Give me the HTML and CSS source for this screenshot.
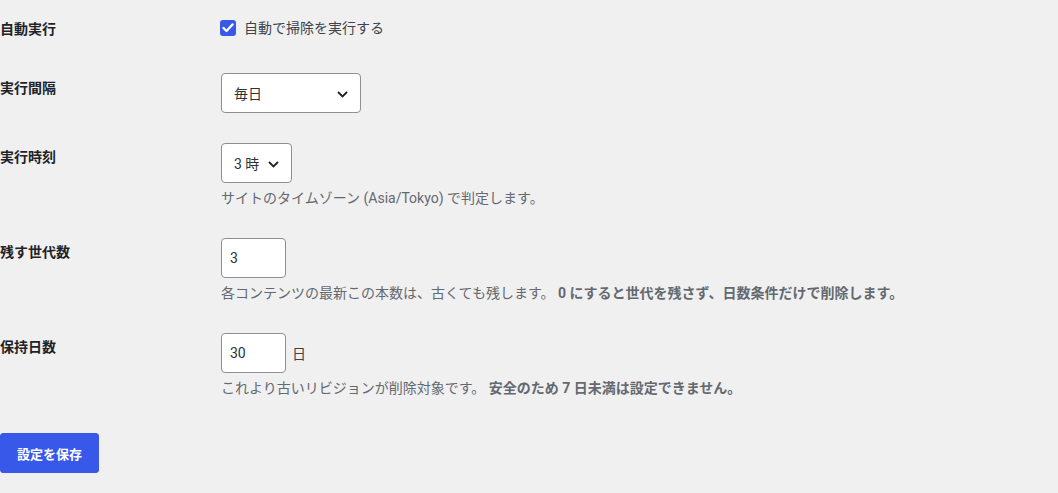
FILE: index.html
```html
<!DOCTYPE html>
<html lang="ja">
<head>
<meta charset="utf-8">
<title>設定</title>
<link rel="stylesheet" href="styles.css">
</head>
<body>
<form class="settings">
  <div class="row">
    <div class="row-label">自動実行</div>
    <div class="field field-first">
      <label class="check">
        <span class="check-box">
          <svg width="12" height="10" viewBox="0 0 12 10"><polyline points="1.5,5 4.5,8 10.5,1.5" fill="none" stroke="#fff" stroke-width="2.4" stroke-linejoin="round" stroke-linecap="round"/></svg>
        </span>
        <span>自動で掃除を実行する</span>
      </label>
    </div>
  </div>

  <div class="row">
    <div class="row-label">実行間隔</div>
    <div class="field field-tight">
      <div class="select select-wide">
        <span class="select-value">毎日</span>
        <svg class="chevron" width="11" height="7" viewBox="0 0 11 7"><polyline points="1,1 5.5,5.5 10,1" fill="none" stroke="#1d2327" stroke-width="1.8"/></svg>
      </div>
    </div>
  </div>

  <div class="row">
    <div class="row-label">実行時刻</div>
    <div class="field">
      <div class="select select-narrow">
        <span class="select-value">3 時</span>
        <svg class="chevron" width="11" height="7" viewBox="0 0 11 7"><polyline points="1,1 5.5,5.5 10,1" fill="none" stroke="#1d2327" stroke-width="1.8"/></svg>
      </div>
      <p class="desc">サイトのタイムゾーン (Asia/Tokyo) で判定します。</p>
    </div>
  </div>

  <div class="row">
    <div class="row-label">残す世代数</div>
    <div class="field">
      <div class="input">3</div>
      <p class="desc">各コンテンツの最新この本数は、古くても残します。 <strong>0 にすると世代を残さず、日数条件だけで削除します。</strong></p>
    </div>
  </div>

  <div class="row">
    <div class="row-label">保持日数</div>
    <div class="field">
      <div class="input-line">
        <div class="input">30</div>
        <span class="unit">日</span>
      </div>
      <p class="desc">これより古いリビジョンが削除対象です。 <strong>安全のため 7 日未満は設定できません。</strong></p>
    </div>
  </div>

  <div class="submit">
    <span class="button-primary">設定を保存</span>
  </div>
</form>
</body>
</html>
```

FILE: styles.css
```css
html, body {
  margin: 0;
  padding: 0;
  background: #f0f0f1;
}

body {
  font-family: Roboto, "Noto Sans CJK JP", sans-serif;
  font-size: 13px;
  color: #3c434a;
}

.row {
  display: grid;
  grid-template-columns: 221px 1fr;
  align-items: start;
}

.row-label {
  padding: 20px 0;
  font-size: 14px;
  font-weight: 600;
  line-height: 18px;
  color: #1d2327;
}

.field {
  padding: 15px 0;
}

.field-first {
  padding: 20px 0 23px;
}

.field-tight {
  padding: 14px 0 15px;
}

.check {
  display: flex;
  align-items: center;
  gap: 8px;
  height: 16px;
  font-size: 14px;
  line-height: 16px;
  color: #3c434a;
}

.check-box {
  width: 16px;
  height: 16px;
  border-radius: 3px;
  background: #3858e9;
  display: flex;
  align-items: center;
  justify-content: center;
  margin-left: -1px;
}

.select {
  position: relative;
  box-sizing: border-box;
  height: 40px;
  border: 1px solid #8c8f94;
  border-radius: 4px;
  background: #fff;
  display: flex;
  align-items: center;
  padding: 0 24px 0 12px;
  font-size: 14px;
  color: #2c3338;
}

.select-wide { width: 140px; }
.select-narrow { width: 71px; }

.chevron {
  position: absolute;
  right: 12px;
  top: 17px;
}

.input-line {
  display: flex;
  align-items: center;
  gap: 6px;
}

.input {
  box-sizing: border-box;
  width: 65px;
  height: 40px;
  border: 1px solid #8c8f94;
  border-radius: 4px;
  background: #fff;
  display: flex;
  align-items: center;
  padding: 0 8px;
  font-size: 14px;
  color: #2c3338;
}

.unit {
  font-size: 14px;
  color: #3c434a;
}

.desc {
  margin: 5px 0 0;
  font-size: 14px;
  line-height: 20px;
  color: #646970;
}

.desc strong {
  font-weight: 700;
}

.submit {
  margin-top: 20px;
}

.button-primary {
  display: inline-flex;
  align-items: center;
  box-sizing: border-box;
  height: 40px;
  padding: 0 16px;
  border: 1px solid #3858e9;
  border-radius: 3px;
  background: #3858e9;
  color: #fff;
  font-size: 13px;
  font-weight: 600;
}
```
